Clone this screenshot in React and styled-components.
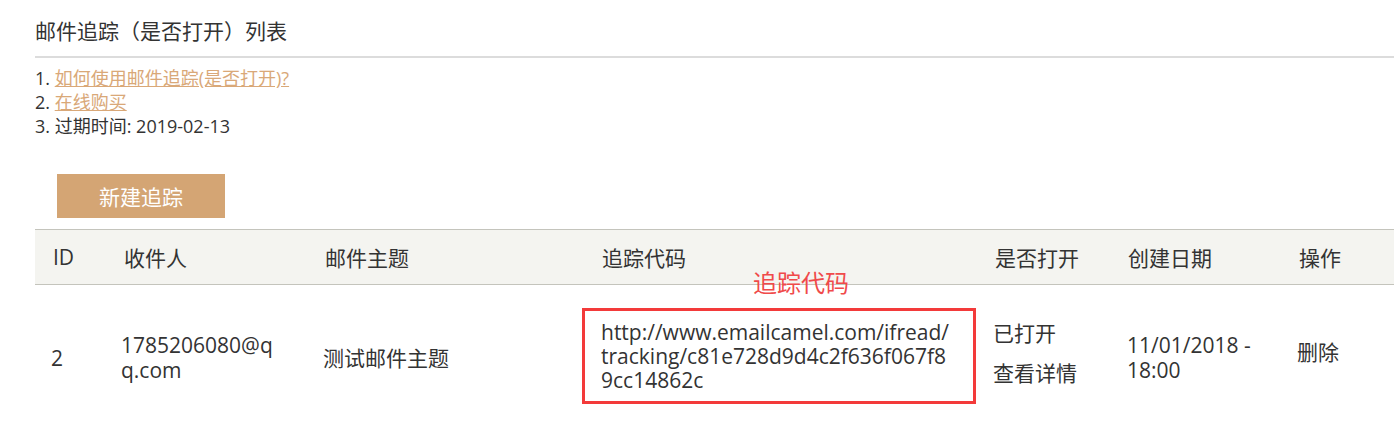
import React from 'react';
import styled, { createGlobalStyle } from 'styled-components';

const GlobalStyle = createGlobalStyle`
  html, body {
    margin: 0;
    padding: 0;
    background: #fff;
    overflow: hidden;
  }
  body {
    font-family: "Open Sans", "Noto Sans CJK SC", sans-serif;
    color: #333;
  }
`;

const Page = styled.div`
  padding: 16px 0 0 35px;
`;

const Title = styled.h2`
  margin: 0;
  padding-bottom: 10px;
  font-size: 21px;
  font-weight: normal;
  line-height: 30px;
  border-bottom: 2px solid #dcdcdc;
`;

const Notes = styled.div`
  margin-top: 8px;
  font-size: 18px;
  line-height: 24px;
`;

const NoteLink = styled.a`
  color: #d9a878;
  text-decoration: underline;
  cursor: pointer;
`;

const AddButton = styled.button`
  display: block;
  margin: 36px 0 11px 22px;
  width: 168px;
  height: 44px;
  border: 0;
  background: #d4a574;
  color: #fff;
  font-family: inherit;
  font-size: 21px;
  cursor: pointer;
`;

const Table = styled.table`
  width: 1359px;
  border-collapse: collapse;
  table-layout: fixed;
`;

const HeadRow = styled.tr`
  background: #f4f4f0;
  border-top: 1px solid #c4c4bc;
  border-bottom: 1px solid #c4c4bc;
`;

const Th = styled.th`
  height: 54px;
  padding: 0 0 0 18px;
  text-align: left;
  font-size: 21px;
  font-weight: normal;
`;

const Td = styled.td`
  position: relative;
  height: 146px;
  padding: 0 ${(props) => props.$right || 0}px 0 ${(props) => props.$left ?? 16}px;
  vertical-align: middle;
  font-size: 21px;
  line-height: 25px;
  word-break: break-all;
`;

const Lift = styled.div`
  padding-bottom: ${(props) => props.$by || 0}px;
`;

const CodeBox = styled.div`
  position: relative;
  margin-bottom: 4px;
  padding: 9px 17px 9px 16px;
  border: 3px solid #f33a3a;
  line-height: 24px;
  word-break: break-all;
`;

const CodeLabel = styled.span`
  position: absolute;
  left: 168px;
  top: -40px;
  font-size: 24px;
  line-height: 24px;
  color: #f04a4a;
  word-break: keep-all;
  white-space: nowrap;
`;

const StatusLine = styled.div`
  & + & {
    margin-top: 15px;
  }
`;

const columns = [
  { key: 'id', title: 'ID', width: 71 },
  { key: 'to', title: '收件人', width: 201 },
  { key: 'subject', title: '邮件主题', width: 275 },
  { key: 'code', title: '追踪代码', width: 395 },
  { key: 'open', title: '是否打开', width: 133 },
  { key: 'date', title: '创建日期', width: 171 },
  { key: 'op', title: '操作', width: 113 },
];

function App() {
  return (
    <Page>
      <GlobalStyle />
      <Title>邮件追踪（是否打开）列表</Title>
      <Notes>
        <div>1. <NoteLink>如何使用邮件追踪(是否打开)?</NoteLink></div>
        <div>2. <NoteLink>在线购买</NoteLink></div>
        <div>3. 过期时间: 2019-02-13</div>
      </Notes>
      <AddButton>新建追踪</AddButton>
      <Table>
        <colgroup>
          {columns.map((c) => (
            <col key={c.key} style={{ width: c.width }} />
          ))}
        </colgroup>
        <thead>
          <HeadRow>
            {columns.map((c) => (
              <Th key={c.key} style={c.key === 'code' ? { paddingLeft: 20 } : undefined}>{c.title}</Th>
            ))}
          </HeadRow>
        </thead>
        <tbody>
          <tr>
            <Td>2</Td>
            <Td $left={15} $right={26}>1785206080@qq.com</Td>
            <Td>测试邮件主题</Td>
            <Td $left={0} $right={1}>
              <CodeBox>
                <CodeLabel>追踪代码</CodeLabel>
                http://www.emailcamel.com/ifread/tracking/c81e728d9d4c2f636f067f89cc14862c
              </CodeBox>
            </Td>
            <Td>
              <Lift $by={10}>
                <StatusLine>已打开</StatusLine>
                <StatusLine>查看详情</StatusLine>
              </Lift>
            </Td>
            <Td $left={17} $right={16} style={{ wordBreak: 'normal' }}>11/01/2018 - 18:00</Td>
            <Td><Lift $by={12}>删除</Lift></Td>
          </tr>
        </tbody>
      </Table>
    </Page>
  );
}

export default App;
